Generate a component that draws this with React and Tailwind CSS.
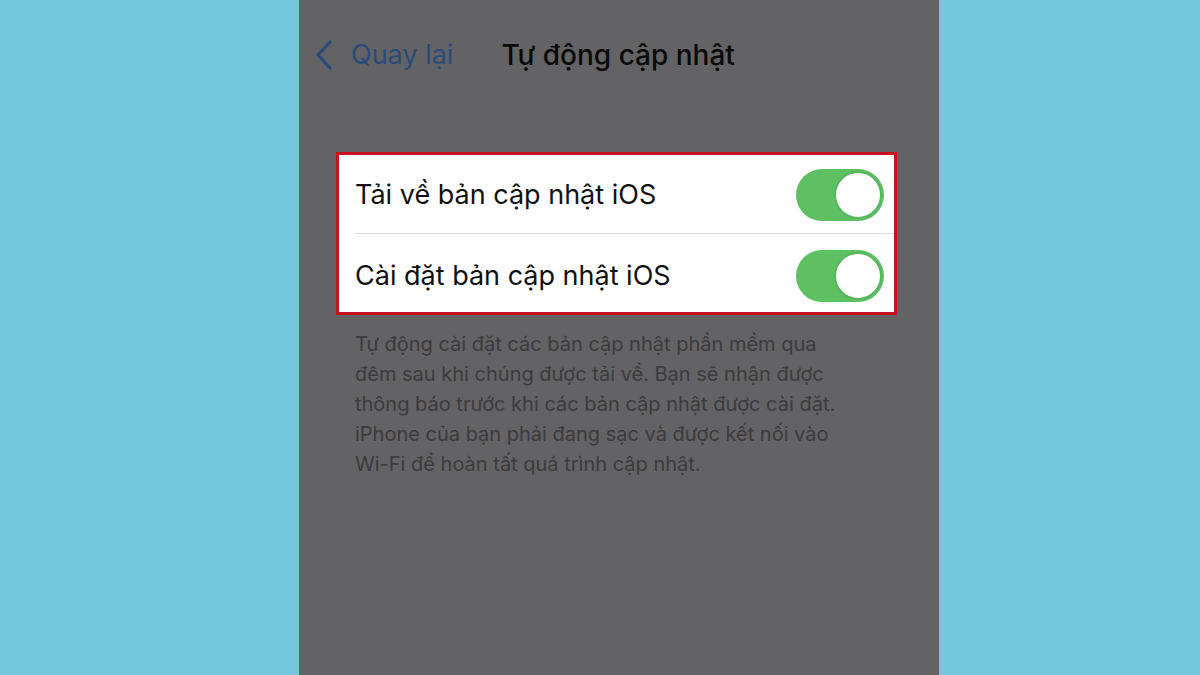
const font = { fontFamily: "Inter, 'Noto Sans', sans-serif" };

function Toggle() {
  return (
    <div className="flex h-[52px] w-[88px] items-center justify-end rounded-full bg-[#5fbf63] p-[2px]">
      <div className="h-[48px] w-[48px] rounded-full border-2 border-[#58b65c] bg-white" />
    </div>
  );
}

function SettingRow({ label, className = "" }) {
  return (
    <div
      className={`flex h-[78px] items-center justify-between pl-[16px] pr-[10px] ${className}`}
    >
      <span className="text-[27px] text-[#111]">{label}</span>
      <Toggle />
    </div>
  );
}

export default function App() {
  return (
    <div className="flex h-[675px] w-[1200px] bg-[#74c7dc]" style={font}>
      <div className="w-[299px]" />
      <div className="flex w-[640px] flex-col bg-[#636264]">
        <div className="flex h-[56px] items-center pt-[54px]">
          <div className="flex items-center pl-[15px] text-[#2b4a7c]">
            <svg width="20" height="32" viewBox="0 0 20 32" fill="none">
              <path
                d="M16 3 L4 16 L16 29"
                stroke="currentColor"
                strokeWidth="3.2"
                strokeLinecap="round"
                strokeLinejoin="round"
              />
            </svg>
            <span className="ml-[17px] text-[27px]">Quay lại</span>
          </div>
          <span className="ml-[48px] text-[28px] font-medium text-[#0a0a0a]">
            Tự động cập nhật
          </span>
        </div>

        <div className="ml-[37px] mt-[96px] w-[561px] border-[3px] border-[#c8101f] bg-white">
          <SettingRow label="Tải về bản cập nhật iOS" className="pt-[2px]" />
          <div className="ml-[16px] h-px bg-[#dcdcdc]" />
          <SettingRow label="Cài đặt bản cập nhật iOS" className="pt-[6px]" />
        </div>

        <p className="ml-[56px] mt-[14px] w-[496px] text-[20px] leading-[30px] text-[#3c3b3e]">
          Tự động cài đặt các bản cập nhật phần mềm qua đêm sau khi chúng được
          tải về. Bạn sẽ nhận được thông báo trước khi các bản cập nhật được
          cài đặt. iPhone của bạn phải đang sạc và được kết nối vào Wi-Fi để
          hoàn tất quá trình cập nhật.
        </p>
      </div>
    </div>
  );
}
